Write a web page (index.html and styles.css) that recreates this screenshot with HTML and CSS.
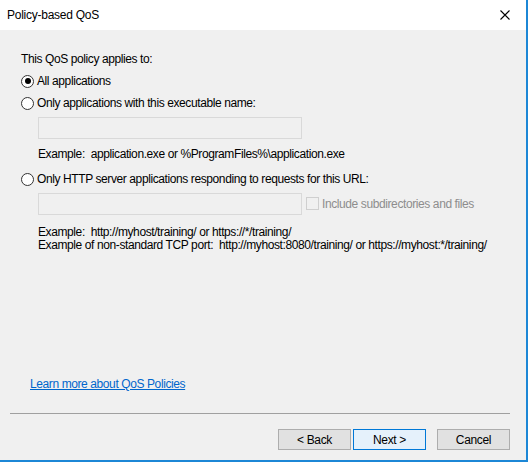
FILE: index.html
```html
<!DOCTYPE html>
<html>
<head>
<meta charset="utf-8">
<link rel="stylesheet" href="styles.css">
</head>
<body>
<div class="window">
  <div class="titlebar">
    <span class="title">Policy-based QoS</span>
    <svg class="close" width="10" height="10" viewBox="0 0 10 10"><path d="M0.5 0.5 L9.5 9.5 M9.5 0.5 L0.5 9.5" stroke="#000" stroke-width="1.1" fill="none"/></svg>
  </div>
  <div class="body">
    <div class="content">
      <div class="heading">This QoS policy applies to:</div>
      <label class="radio-row r1"><span class="radio checked"></span>All applications</label>
      <label class="radio-row r2"><span class="radio"></span>Only applications with this executable name:</label>
      <div class="indent">
        <div class="textbox"></div>
        <div class="example ex1">Example:&nbsp; application.exe or %ProgramFiles%\application.exe</div>
      </div>
      <label class="radio-row r3"><span class="radio"></span>Only HTTP server applications responding to requests for this URL:</label>
      <div class="indent">
        <div class="url-row">
          <div class="textbox"></div>
          <label class="check-row"><span class="checkbox"></span>Include subdirectories and files</label>
        </div>
        <div class="example ex2">Example:&nbsp; http://myhost/training/ or https://*/training/</div>
        <div class="example">Example of non-standard TCP port:&nbsp; http://myhost:8080/training/ or https://myhost:*/training/</div>
      </div>
    </div>
    <a class="link" href="#">Learn more about QoS Policies</a>
    <div class="separator"></div>
    <div class="buttons">
      <button class="btn">&lt; Back</button>
      <button class="btn default">Next &gt;</button>
      <button class="btn cancel">Cancel</button>
    </div>
  </div>
</div>
</body>
</html>
```
FILE: styles.css
```css
html, body {
  margin: 0;
  padding: 0;
}
body {
  width: 528px;
  height: 462px;
  overflow: hidden;
  font-family: "Liberation Sans", Arial, sans-serif;
  font-size: 12px;
  letter-spacing: -0.4px;
  color: #000;
  white-space: nowrap;
}
.window {
  width: 528px;
  height: 462px;
  box-sizing: border-box;
  border-right: 2px solid #1c87d6;
  border-bottom: 2px solid #1c87d6;
  background: #f0f0f0;
  display: flex;
  flex-direction: column;
}
.titlebar {
  height: 30px;
  background: #fff;
  display: flex;
  align-items: center;
  justify-content: space-between;
  padding: 0 16px 0 7px;
  flex: none;
}
.title {
  font-size: 12px;
  letter-spacing: -0.25px;
  margin-top: -1px;
}
.close {
  margin-top: -1px;
}
.body {
  flex: 1;
  display: flex;
  flex-direction: column;
}
.content {
  padding: 22px 0 0 21px;
  flex: 1;
}
.heading {
  line-height: 14px;
}
.radio-row {
  display: flex;
  align-items: center;
  line-height: 14px;
}
.r1 { margin-top: 8px; }
.r2 { margin-top: 8px; }
.r3 { margin-top: 11px; }
.radio {
  width: 11px;
  height: 11px;
  border: 1px solid #333;
  border-radius: 50%;
  background: #fff;
  margin-right: 3px;
  box-sizing: content-box;
  position: relative;
  flex: none;
}
.radio.checked::after {
  content: "";
  position: absolute;
  left: 2.5px;
  top: 2.5px;
  width: 6px;
  height: 6px;
  border-radius: 50%;
  background: #000;
}
.indent {
  padding-left: 17px;
}
.textbox {
  width: 262px;
  height: 20px;
  border: 1px solid #d9d9d9;
  background: #f0f0f0;
  flex: none;
}
.r2 + .indent .textbox {
  margin-top: 7px;
}
.url-row {
  display: flex;
  align-items: center;
  margin-top: 7px;
}
.check-row {
  display: flex;
  align-items: center;
  color: #8d8d8d;
  margin-left: 4px;
  line-height: 14px;
}
.checkbox {
  width: 11px;
  height: 11px;
  border: 1px solid #cfcfcf;
  background: #f0f0f0;
  margin-right: 3px;
  margin-top: -1px;
}
.example {
  line-height: 13px;
}
.ex1 { margin-top: 9px; }
.ex2 { margin-top: 11px; }
.link {
  color: #0066cc;
  text-decoration: underline;
  margin-left: 30px;
  margin-bottom: 22px;
  line-height: 14px;
  align-self: flex-start;
}
.separator {
  height: 1px;
  background: #a0a0a0;
  margin: 0 16px 0 10px;
}
.buttons {
  display: flex;
  justify-content: flex-end;
  padding: 15px 16px 10px 0;
}
.btn {
  width: 73px;
  height: 21px;
  box-sizing: border-box;
  border: 1px solid #adadad;
  background: #e1e1e1;
  font-family: inherit;
  font-size: 12px;
  letter-spacing: -0.35px;
  color: #000;
  padding: 0;
  margin-left: 2px;
}
.btn.default {
  border: 1px solid #0078d7;
  background: #e5f1fb;
}
.btn.cancel {
  margin-left: 11px;
}
```
